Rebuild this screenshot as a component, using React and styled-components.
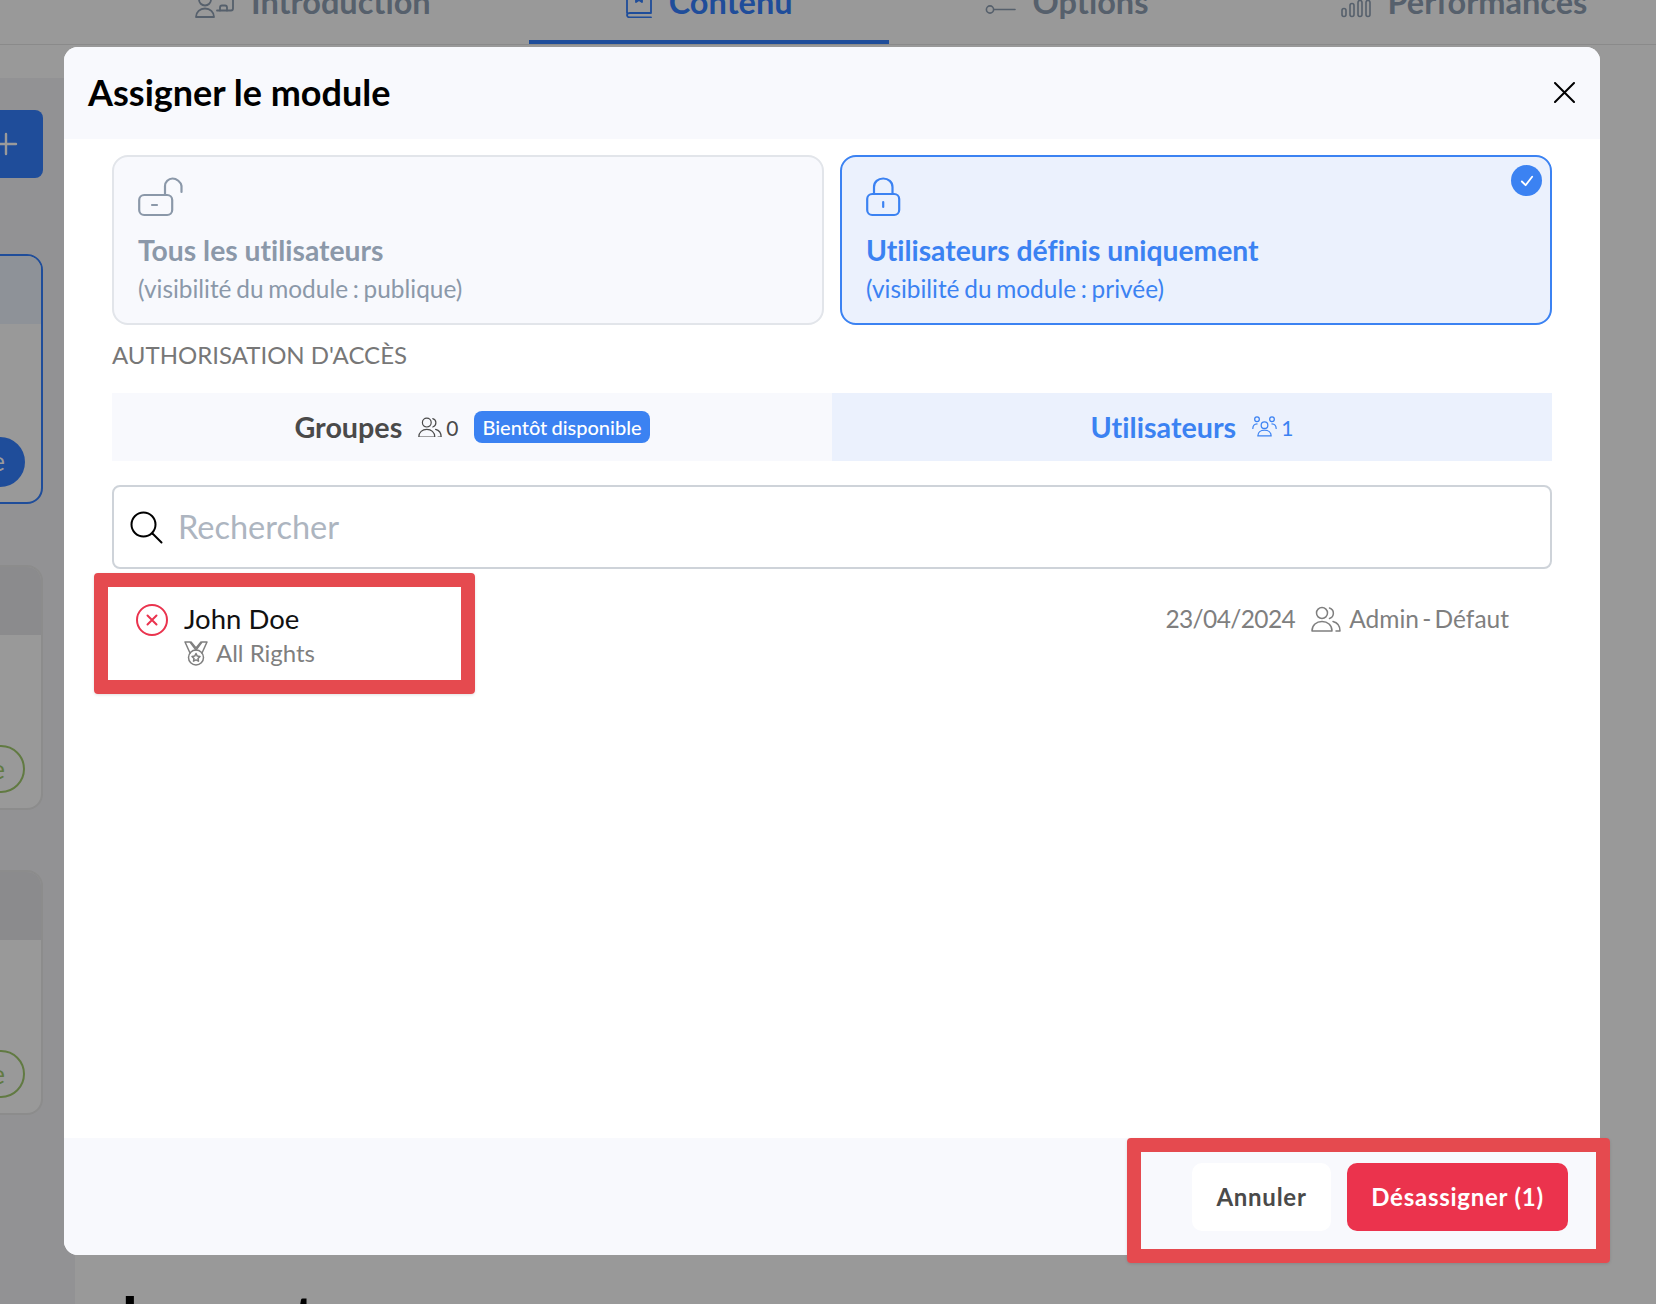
import React from 'react'
import styled, { createGlobalStyle } from 'styled-components'

const GlobalStyle = createGlobalStyle`
  html, body {
    margin: 0;
    padding: 0;
    background: #999999;
    overflow: hidden;
  }
  * { box-sizing: border-box; }
  body {
    font-family: "Lato", "Liberation Sans", sans-serif;
    font-variant-ligatures: none;
  }
`

const Page = styled.div`
  position: relative;
  width: 1656px;
  height: 1304px;
  overflow: hidden;
  background: #999999;
  display: flex;
  flex-direction: column;
`

const TabBar = styled.div`
  display: flex;
  align-items: flex-end;
  flex: none;
  height: 45px;
  padding-left: 99px;
  border-bottom: 1px solid #8a8a8a;
  overflow: hidden;
`

const TopTab = styled.div`
  flex: none;
  display: flex;
  align-items: center;
  gap: 16px;
  height: 62px;
  padding: 0 96px 19px;
  font-size: 32.5px;
  line-height: 39px;
  font-weight: 700;
  color: ${p => (p.$active ? '#1f4d9a' : '#56606c')};
  border-bottom: 4px solid ${p => (p.$active ? '#1f4d9a' : 'transparent')};
  &:first-child {
    padding-right: 98px;
  }
`

const Behind = styled.div`
  flex: 1;
  display: flex;
  min-height: 0;
`

const Rail = styled.div`
  flex: none;
  width: 75px;
  margin-top: 33px;
  padding: 32px 33px 0 0;
  background: #929294;
  display: flex;
  flex-direction: column;
  align-items: flex-end;
  overflow: hidden;
`

const AddButton = styled.div`
  flex: none;
  width: 120px;
  height: 68px;
  margin-right: -1px;
  padding-right: 25px;
  border-radius: 8px;
  background: #1f4d9a;
  color: #9a9a9a;
  display: flex;
  align-items: center;
  justify-content: flex-end;
`

const RailCard = styled.div`
  flex: none;
  width: 260px;
  height: ${p => (p.$active ? '250px' : '245px')};
  margin: ${p => p.$top} -1px 0 0;
  border: 2px solid ${p => (p.$active ? '#1f4d9a' : '#8c8c8c')};
  border-radius: 16px;
  background: #999999;
  display: flex;
  flex-direction: column;
  overflow: hidden;
`

const RailCardHead = styled.div`
  flex: none;
  height: 68px;
  background: ${p => (p.$active ? '#8e9298' : '#8b8b8d')};
`

const RailPill = styled.div`
  align-self: flex-end;
  margin: auto 16px 15px 0;
  height: ${p => (p.$active ? '50px' : '48px')};
  padding: 0 18px;
  border-radius: 25px;
  font-size: 26px;
  line-height: 44px;
  white-space: nowrap;
  background: ${p => (p.$active ? '#1f4d9a' : 'transparent')};
  color: ${p => (p.$active ? '#9a9a9a' : '#617a42')};
  border: 2px solid ${p => (p.$active ? '#1f4d9a' : '#617a42')};
`

const BehindMain = styled.div`
  flex: 1;
  padding: 0 0 0 46px;
  display: flex;
  align-items: flex-end;
  min-width: 0;
`

const BehindHeading = styled.div`
  flex: none;
  margin-bottom: -47px;
  font-size: 60px;
  line-height: 70px;
  font-weight: 700;
  color: #000000;
  white-space: nowrap;
`

const Modal = styled.div`
  position: absolute;
  left: 64px;
  top: 47px;
  width: 1536px;
  height: 1208px;
  border-radius: 14px;
  background: #ffffff;
  display: flex;
  flex-direction: column;
  overflow: hidden;
`

const ModalHeader = styled.div`
  flex: none;
  height: 92px;
  padding: 0 25px 2px 24px;
  background: #f8f9fd;
  display: flex;
  align-items: center;
  justify-content: space-between;
`

const ModalTitle = styled.h1`
  margin: 0;
  font-size: 36px;
  line-height: 44px;
  font-weight: 700;
  color: #000000;
`

const ModalBody = styled.div`
  flex: 1;
  min-height: 0;
  padding: 16px 48px 0;
  display: flex;
  flex-direction: column;
`

const Choices = styled.div`
  flex: none;
  display: grid;
  grid-template-columns: 1fr 1fr;
  gap: 16px;
`

const Choice = styled.div`
  position: relative;
  height: 170px;
  padding: 20px 24px 0;
  border: 2px solid ${p => (p.$active ? '#3b82f2' : '#e2e5ea')};
  border-radius: 16px;
  background: ${p => (p.$active ? '#ebf1fd' : '#f8f9fd')};
  color: ${p => (p.$active ? '#3b82f2' : '#8b98a9')};
  display: flex;
  flex-direction: column;
  align-items: flex-start;
`

const ChoiceTitle = styled.div`
  margin-top: 14px;
  font-size: 28.3px;
  line-height: 39px;
  font-weight: 700;
`

const ChoiceHint = styled.div`
  font-size: 24.4px;
  line-height: 38px;
  word-spacing: -1.5px;
`

const CheckBadge = styled.div`
  position: absolute;
  top: 8px;
  right: 8px;
  width: 31px;
  height: 31px;
  border-radius: 50%;
  background: #3b82f2;
  color: #ffffff;
  display: flex;
  align-items: center;
  justify-content: center;
`

const SectionLabel = styled.div`
  flex: none;
  margin: 12px 0 21px;
  font-size: 24px;
  line-height: 35px;
  color: #777777;
`

const AccessTabs = styled.div`
  flex: none;
  display: grid;
  grid-template-columns: 720px 1fr;
  height: 68px;
`

const AccessTab = styled.div`
  display: flex;
  align-items: center;
  justify-content: center;
  background: ${p => (p.$active ? '#ebf1fd' : '#f8f9fd')};
  color: ${p => (p.$active ? '#3b82f2' : '#4a4a4a')};
`

const AccessName = styled.span`
  font-size: 28.7px;
  font-weight: 700;
  margin-right: 16px;
`

const AccessCount = styled.span`
  font-size: 21px;
  margin-left: 4px;
`

const SoonBadge = styled.span`
  margin-left: 16px;
  height: 32px;
  padding: 0 8px;
  border-radius: 8px;
  background: #3b82f2;
  color: #ffffff;
  font-size: 20px;
  line-height: 32px;
  font-weight: 500;
  word-spacing: -1px;
`

const SearchBox = styled.label`
  flex: none;
  margin-top: 24px;
  height: 84px;
  padding: 0 16px;
  border: 2px solid #ced3d9;
  border-radius: 8px;
  display: flex;
  align-items: center;
  gap: 15px;
  color: #000000;
`

const SearchInput = styled.input`
  flex: 1;
  min-width: 0;
  border: 0;
  outline: 0;
  padding: 0 0 2px;
  background: transparent;
  font-family: inherit;
  font-size: 32.5px;
  color: #333333;
  &::placeholder {
    color: #adb5c0;
    opacity: 1;
  }
`

const UserRow = styled.div`
  flex: none;
  margin-top: 32px;
  padding: 0 43px 0 24px;
  display: flex;
  justify-content: space-between;
  align-items: flex-start;
`

const UserMain = styled.div`
  display: flex;
  align-items: flex-start;
  gap: 16px;
  color: #ea334e;
`

const RemoveSlot = styled.div`
  flex: none;
  display: flex;
  margin-top: 3px;
`

const UserInfo = styled.div`
  display: flex;
  flex-direction: column;
`

const UserName = styled.div`
  font-size: 27.5px;
  line-height: 35px;
  color: #111111;
`

const UserRole = styled.div`
  display: flex;
  align-items: center;
  gap: 8px;
  font-size: 24px;
  line-height: 34px;
  color: #7f7f7f;
`

const UserMeta = styled.div`
  display: flex;
  align-items: center;
  font-size: 24.5px;
  line-height: 36px;
  color: #7f7f7f;
`

const MetaDate = styled.span`
  margin-right: 16px;
  letter-spacing: -0.6px;
`

const MetaRole = styled.span`
  margin-left: 8px;
  word-spacing: -3px;
`

const ModalFooter = styled.div`
  flex: none;
  height: 117px;
  padding-right: 32px;
  background: #f8f9fd;
  display: flex;
  align-items: center;
  justify-content: flex-end;
  gap: 16px;
`

const FooterButton = styled.button`
  height: 68px;
  width: ${p => p.$width};
  border: 0;
  padding: 0;
  border-radius: 10px;
  background: ${p => (p.$danger ? '#eb334d' : '#ffffff')};
  color: ${p => (p.$danger ? '#ffffff' : '#4a4a4a')};
  font-family: inherit;
  font-size: 24px;
  font-weight: 700;
  letter-spacing: 0.75px;
`

const Annotation = styled.div`
  position: absolute;
  left: ${p => p.$x}px;
  top: ${p => p.$y}px;
  width: ${p => p.$w}px;
  height: ${p => p.$h}px;
  border: 14px solid #e54a4f;
  border-radius: 4px;
  box-shadow: 0 1px 3px rgba(0, 0, 0, 0.12);
`

const Line = ({ size = 24, w = 24, h = 24, sw = 2, children }) => (
  <svg
    width={size}
    height={(size * h) / w}
    viewBox={`0 0 ${w} ${h}`}
    fill="none"
    stroke="currentColor"
    strokeWidth={sw}
    strokeLinecap="round"
    strokeLinejoin="round"
  >
    {children}
  </svg>
)

const PersonScreenIcon = () => (
  <Line size={40} w={40} h={32} sw={1.8}>
    <circle cx="10" cy="13.500" r="6" />
    <path d="M1 31c0-5 4-8.500 9-8.500s9 3.500 9 8.500H1z" />
    <path d="M38 10v12.500c0 1-1 2-2 2H22" />
    <path d="M25 24.500v-3c0-1 1-2 2-2h3c1 0 2 1 2 2v3" />
  </Line>
)

const BookIcon = () => (
  <Line size={28} w={28} h={32} sw={1.8}>
    <path d="M2 27V2h24v25H5c-2 0-3 1-3 2s1 2.500 3 2.500h21" />
    <path d="M11 2v14l3-2 3 2V2" />
  </Line>
)

const KeyIcon = () => (
  <Line size={32} w={32} h={28} sw={1.6}>
    <circle cx="5" cy="21.500" r="3.600" />
    <path d="M9 21.500h21" />
  </Line>
)

const BarsIcon = () => (
  <Line size={31} w={31} h={32} sw={1.6}>
    <rect x="2" y="22.500" width="4" height="8" rx="2" />
    <rect x="10" y="17.500" width="4" height="13" rx="2" />
    <rect x="18" y="14.500" width="4" height="16" rx="2" />
    <rect x="26" y="14.500" width="4" height="16" rx="2" />
  </Line>
)

const OpenLockIcon = () => (
  <Line size={46} w={46} h={40} sw={2.2}>
    <rect x="1.2" y="18" width="33" height="20" rx="5" />
    <path d="M14 28h5" />
    <path d="M27 18V9c0-4 3.5-7.5 7.5-7.5S43 5 43.5 9v6" />
  </Line>
)

const ClosedLockIcon = () => (
  <Line size={35} w={35} h={40} sw={2.2}>
    <rect x="1.2" y="17" width="32" height="21" rx="5" />
    <path d="M17.2 25v5" />
    <path d="M8 17V10c0-5 4-8.5 9.2-8.5S26.5 5 26.5 10v7" />
  </Line>
)

const TwoPeopleIcon = ({ size = 24 }) => (
  <Line size={size} w={30} h={26} sw={1.5}>
    <circle cx="11" cy="7" r="5.5" />
    <path d="M18.5 2a5.5 5.5 0 0 1 0 10.5" />
    <path d="M1 25c0-6 4.5-9.5 10-9.5S21 19 21 25H1z" />
    <path d="M22 15.5c4 1 7 4 7 9.5h-4" />
  </Line>
)

const ThreePeopleIcon = () => (
  <Line size={25} w={30} h={26} sw={1.5}>
    <circle cx="15" cy="11" r="4" />
    <circle cx="6" cy="4" r="2.8" />
    <circle cx="24" cy="4" r="2.8" />
    <path d="M1 15c0-3 2-5.5 5-5.5" />
    <path d="M29 15c0-3-2-5.5-5-5.5" />
    <path d="M7 24c0-4.500 3.500-7 8-7s8 2.500 8 7H7z" />
  </Line>
)

const MedalIcon = () => (
  <Line size={24} w={24} h={26} sw={1.5}>
    <path d="M6 13 1 2h5l6 8 6-8h5l-5 11" />
    <path d="M7 2l5 6 5-6" />
    <circle cx="12" cy="17.500" r="7.500" />
    <path d="m12 13.500 1.300 2.600 2.700.4-2 2 .5 2.700-2.500-1.300-2.500 1.300.5-2.700-2-2 2.700-.4z" />
  </Line>
)

const RemoveIcon = () => (
  <Line size={32} w={32} h={32} sw={2}>
    <circle cx="16" cy="16" r="15" />
    <path d="m11.500 11.500 9 9M20.500 11.500l-9 9" />
  </Line>
)

const SearchIcon = () => (
  <Line size={33} w={33} h={33} sw={2}>
    <circle cx="13.500" cy="13.500" r="12" />
    <path d="m22.500 22.500 9 9" />
  </Line>
)

const CloseIcon = () => (
  <Line size={21} w={21} h={21} sw={2}>
    <path d="m1 1 19 19M20 1 1 20" />
  </Line>
)

const PlusIcon = () => (
  <Line size={24} w={24} h={24} sw={2.4}>
    <path d="M12 2v20M2 12h20" />
  </Line>
)

export default function App() {
  return (
    <Page>
      <GlobalStyle />
      <TabBar>
        <TopTab><PersonScreenIcon />Introduction</TopTab>
        <TopTab $active><BookIcon />Contenu</TopTab>
        <TopTab><KeyIcon />Options</TopTab>
        <TopTab><BarsIcon />Performances</TopTab>
      </TabBar>
      <Behind>
        <Rail>
          <AddButton><PlusIcon /></AddButton>
          <RailCard $active $top="76px">
            <RailCardHead $active />
            <RailPill $active>Modifie</RailPill>
          </RailCard>
          <RailCard $top="61px">
            <RailCardHead />
            <RailPill>Assigne</RailPill>
          </RailCard>
          <RailCard $top="60px">
            <RailCardHead />
            <RailPill>Assigne</RailPill>
          </RailCard>
        </Rail>
        <BehindMain>
          <BehindHeading>Le contenu</BehindHeading>
        </BehindMain>
      </Behind>

      <Modal>
        <ModalHeader>
          <ModalTitle>Assigner le module</ModalTitle>
          <CloseIcon />
        </ModalHeader>
        <ModalBody>
          <Choices>
            <Choice>
              <OpenLockIcon />
              <ChoiceTitle>Tous les utilisateurs</ChoiceTitle>
              <ChoiceHint>(visibilité du module : publique)</ChoiceHint>
            </Choice>
            <Choice $active>
              <ClosedLockIcon />
              <ChoiceTitle>Utilisateurs définis uniquement</ChoiceTitle>
              <ChoiceHint>(visibilité du module : privée)</ChoiceHint>
              <CheckBadge>
                <Line size={14} w={15} h={15} sw={2}>
                  <path d="m2 8 4 4 7-9" />
                </Line>
              </CheckBadge>
            </Choice>
          </Choices>
          <SectionLabel>AUTHORISATION D'ACCÈS</SectionLabel>
          <AccessTabs>
            <AccessTab>
              <AccessName>Groupes</AccessName>
              <TwoPeopleIcon />
              <AccessCount>0</AccessCount>
              <SoonBadge>Bientôt disponible</SoonBadge>
            </AccessTab>
            <AccessTab $active>
              <AccessName>Utilisateurs</AccessName>
              <ThreePeopleIcon />
              <AccessCount>1</AccessCount>
            </AccessTab>
          </AccessTabs>
          <SearchBox>
            <SearchIcon />
            <SearchInput placeholder="Rechercher" />
          </SearchBox>
          <UserRow>
            <UserMain>
              <RemoveSlot><RemoveIcon /></RemoveSlot>
              <UserInfo>
                <UserName>John Doe</UserName>
                <UserRole><MedalIcon />All Rights</UserRole>
              </UserInfo>
            </UserMain>
            <UserMeta>
              <MetaDate>23/04/2024</MetaDate>
              <TwoPeopleIcon size={30} />
              <MetaRole>Admin - Défaut</MetaRole>
            </UserMeta>
          </UserRow>
        </ModalBody>
        <ModalFooter>
          <FooterButton $width="139px">Annuler</FooterButton>
          <FooterButton $danger $width="221px">Désassigner (1)</FooterButton>
        </ModalFooter>
      </Modal>

      <Annotation $x={94} $y={573} $w={381} $h={121} />
      <Annotation $x={1127} $y={1138} $w={483} $h={125} />
    </Page>
  )
}
